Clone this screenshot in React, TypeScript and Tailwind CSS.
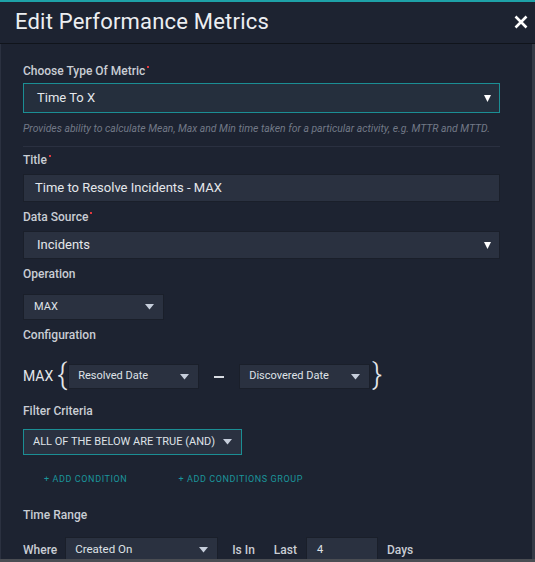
import React from 'react';

const Caret = ({ className = '', big }: { className?: string; big?: boolean }) =>
  big ? (
    <svg className={className} width="7" height="8" viewBox="0 0 7 8">
      <path d="M0 1h7L3.5 8z" fill="currentColor" />
    </svg>
  ) : (
    <svg className={className} width="9" height="6" viewBox="0 0 9 6">
      <path d="M0 0h9L4.5 5.5z" fill="currentColor" />
    </svg>
  );

const Label = ({ text, required, className = '' }: { text: string; required?: boolean; className?: string }) => (
  <div className={`flex h-4 items-start text-[12px] font-medium leading-4 text-[#c9cdd4] ${className}`}>
    {text}
    {required && <span className="ml-[2px] mt-[3px] h-[2px] w-[2px] bg-[#e0393e]" />}
  </div>
);

export default function App() {
  return (
    <div
      className="flex h-[562px] w-[535px] flex-col overflow-hidden bg-[#1d2331] text-[#dfe2e7]"
      style={{ fontFamily: 'Roboto, "Noto Sans", sans-serif' }}
    >
      <div className="h-[2px] bg-[#1ea2a8]" />
      {/* Header */}
      <div className="flex h-[42px] items-center justify-between border-b border-[#10141b] pl-[15px] pr-[4px]">
        <h1 className="-mt-[2px] text-[22px] font-normal tracking-[0.2px] text-[#eceef1]">Edit Performance Metrics</h1>
        <svg width="14" height="14" viewBox="0 0 14 14" className="mr-[3px] -mt-[2px] text-white">
          <path d="M1.5 1.5l11 11M12.5 1.5l-11 11" stroke="currentColor" strokeWidth="2.6" />
        </svg>
      </div>

      <div className="flex min-h-0 flex-1 border-l border-[#2b3140]">
        <div className="min-w-0 flex-1 pl-[22px] pr-[32px]">
          <Label text="Choose Type Of Metric" required className="mt-[19px]" />
          <div className="mt-[4px] flex h-[30px] items-center justify-between border border-[#1b8e94] bg-[#252f3d] pl-[13px] pr-[8px]">
            <span className="text-[13px] text-[#e4e7eb]">Time To X</span>
            <Caret big className="text-white" />
          </div>
          <div className="mt-[9px] h-[14px] whitespace-nowrap text-[10.4px] italic leading-[14px] text-[#727987]">
            Provides ability to calculate Mean, Max and Min time taken for a particular activity, e.g. MTTR and MTTD.
          </div>
          <div className="mt-[10px] h-px bg-[#2a3040]" />

          <Label text="Title" required className="mt-[5px]" />
          <div className="mt-[6px] flex h-[28px] items-center border border-[#1a1f2a] bg-[#2a3140] pl-[11px]">
            <span className="text-[13px] text-[#e4e7eb]">Time to Resolve Incidents - MAX</span>
          </div>

          <Label text="Data Source" required className="mt-[7px]" />
          <div className="mt-[6px] flex h-[28px] items-center justify-between border border-[#1a1f2a] bg-[#2a3140] pl-[13px] pr-[8px]">
            <span className="text-[13px] text-[#e4e7eb]">Incidents</span>
            <Caret big className="text-white" />
          </div>

          <Label text="Operation" className="mt-[7px]" />
          <div className="mt-[12px] flex h-[26px] w-[141px] items-center justify-between border border-[#1a1f2a] bg-[#2a3140] pl-[10px] pr-[9px]">
            <span className="text-[11px] text-[#dfe2e7]">MAX</span>
            <Caret className="text-[#c6cedb]" />
          </div>

          <Label text="Configuration" className="mt-[7px]" />
          <div className="mt-[21px] flex h-[25px] items-center">
            <span className="mr-[4px] text-[14px] text-[#e4e7eb]">MAX</span>
            <span className="-mt-[6px] mr-[1px] text-[30px] font-light leading-none text-[#e4e7eb]">{'{'}</span>
            <div className="flex h-[25px] w-[131px] items-center justify-between border border-[#1a1f2a] bg-[#2a3140] pl-[9px] pr-[9px]">
              <span className="text-[11px] text-[#dfe2e7]">Resolved Date</span>
              <Caret className="text-[#c6cedb]" />
            </div>
            <div className="mx-[15px] h-[2px] w-[10px] bg-[#d8dce2]" />
            <div className="flex h-[25px] w-[131px] items-center justify-between border border-[#1a1f2a] bg-[#2a3140] pl-[9px] pr-[9px]">
              <span className="text-[11px] text-[#dfe2e7]">Discovered Date</span>
              <Caret className="text-[#c6cedb]" />
            </div>
            <span className="-mt-[6px] ml-[2px] text-[30px] font-light leading-none text-[#e4e7eb]">{'}'}</span>
          </div>

          <Label text="Filter Criteria" className="mt-[14px]" />
          <div className="mt-[10px] flex h-[26px] w-[219px] items-center justify-between border border-[#1b8e94] bg-[#2a3140] pl-[9px] pr-[9px]">
            <span className="whitespace-nowrap text-[11px] text-[#dfe2e7]">ALL OF THE BELOW ARE TRUE (AND)</span>
            <Caret className="text-[#c6cedb]" />
          </div>

          <div className="mt-[18px] flex h-[14px] items-center whitespace-nowrap text-[9px] tracking-[0.6px] text-[#1b959b]">
            <span className="ml-[21px]">+ ADD CONDITION</span>
            <span className="ml-[51px]">+ ADD CONDITIONS GROUP</span>
          </div>

          <Label text="Time Range" className="mt-[20px]" />
          <div className="mt-[14px] flex h-[26px] items-center text-[12px] font-medium text-[#c9cdd4]">
            <span>Where</span>
            <div className="ml-[8px] flex h-[26px] w-[153px] items-center justify-between border border-[#1a1f2a] bg-[#2a3140] pl-[9px] pr-[9px]">
              <span className="text-[11.5px] font-normal text-[#dfe2e7]">Created On</span>
              <Caret className="text-[#c6cedb]" />
            </div>
            <span className="ml-[14px]">Is In</span>
            <span className="ml-[19px]">Last</span>
            <div className="ml-[9px] flex h-[26px] w-[72px] items-center border border-[#1a1f2a] bg-[#2a3140] pl-[10px]">
              <span className="text-[11px] font-normal text-[#dfe2e7]">4</span>
            </div>
            <span className="ml-[9px]">Days</span>
          </div>
        </div>
        <div className="w-[3px] bg-[#343a46]" />
      </div>
      <div className="h-[3px] bg-[#4a4d53]" />
    </div>
  );
}
